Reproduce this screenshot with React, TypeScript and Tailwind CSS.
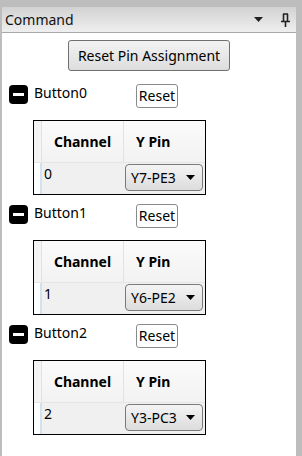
const font = { fontFamily: '"Segoe UI", "Noto Sans", sans-serif' };

const groups = [
  { name: "Button0", channel: "0", pin: "Y7-PE3" },
  { name: "Button1", channel: "1", pin: "Y6-PE2" },
  { name: "Button2", channel: "2", pin: "Y3-PC3" },
];

function MinusBox() {
  return (
    <div className="w-[19px] h-[19px] rounded-[4px] bg-black flex items-center justify-center">
      <div className="w-[11px] h-[3px] bg-white" />
    </div>
  );
}

function Group({ name, channel, pin }: { name: string; channel: string; pin: string }) {
  return (
    <div className="flex flex-col">
      <div className="flex items-start h-[24px]">
        <div className="w-[134px] flex items-start">
          <div className="ml-[7px] mt-[1px]">
            <MinusBox />
          </div>
          <span className="ml-[6px] text-[14px] leading-[18px] text-black">{name}</span>
        </div>
        <button className="w-[42px] h-[24px] bg-white border border-[#8a8a8a] rounded-[3px] text-[14px] leading-[20px] text-black">
          Reset
        </button>
      </div>
      <div className="ml-[31px] mt-[12px] w-[173px] h-[75px] border border-black bg-white flex flex-col">
        <div className="flex h-[42px] bg-gradient-to-b from-[#fbfbfb] to-[#f2f2f2] border-b border-[#e6e6e6]">
          <div className="w-[8px] border-r border-[#e2e2e2] bg-[#f4f4f4]" />
          <div className="w-[82px] border-r border-[#e2e2e2] flex items-center justify-center text-[14px] font-bold text-black">
            Channel
          </div>
          <div className="flex-1 flex items-center pl-[12px] text-[14px] font-bold text-black">Y Pin</div>
        </div>
        <div className="flex flex-1 bg-[#f0f0f0]">
          <div className="w-[8px] border-r-2 border-[#cfe3f3] bg-white" />
          <div className="w-[82px] pl-[2px] pt-[1px] text-[14px] leading-[20px] text-black">{channel}</div>
          <div className="flex-1 pl-[1px] pt-[1px]">
            <div className="w-[78px] h-[27px] rounded-[4px] border border-[#7a7a7a] bg-gradient-to-b from-[#f4f4f4] to-[#dcdcdc] flex items-center pl-[5px] pr-[7px]">
              <span className="text-[14px] leading-[20px] text-black">{pin}</span>
              <svg className="ml-auto" width="9" height="5" viewBox="0 0 9 5">
                <path d="M0 0H9L4.5 5Z" fill="#000" />
              </svg>
            </div>
          </div>
        </div>
      </div>
    </div>
  );
}

export default function App() {
  return (
    <div className="w-[302px] h-[456px] bg-[#bdbdbd] pt-[7px] pl-[2px] pr-[6px] flex flex-col" style={font}>
      {/* title bar */}
      <div className="h-[26px] flex items-center bg-gradient-to-b from-[#d2d2d2] to-[#efefef] border-b border-[#a8a8a8] pl-[3px] pr-[6px]">
        <span className="text-[14px] text-[#111]">Command</span>
        <svg className="ml-auto mr-[18px]" width="9" height="5" viewBox="0 0 9 5">
          <path d="M0 0H9L4.5 5Z" fill="#222" />
        </svg>
        <svg width="9" height="14" viewBox="0 0 9 14">
          <path d="M2 1H7M2.5 1V8M6.5 1V8M0 8.5H9M4.5 8.5V14" stroke="#222" strokeWidth="1.6" fill="none" />
        </svg>
      </div>

      <div className="flex-1 bg-white flex flex-col">
        <div className="flex justify-center pt-[7px]">
          <button className="w-[162px] h-[31px] rounded-[3px] border border-[#707070] bg-gradient-to-b from-[#f3f3f3] to-[#dddddd] text-[14px] text-black">
            Reset Pin Assignment
          </button>
        </div>
        <div className="flex flex-col gap-[9px] mt-[13px]">
          {groups.map((g) => (
            <Group key={g.name} {...g} />
          ))}
        </div>
      </div>
    </div>
  );
}
